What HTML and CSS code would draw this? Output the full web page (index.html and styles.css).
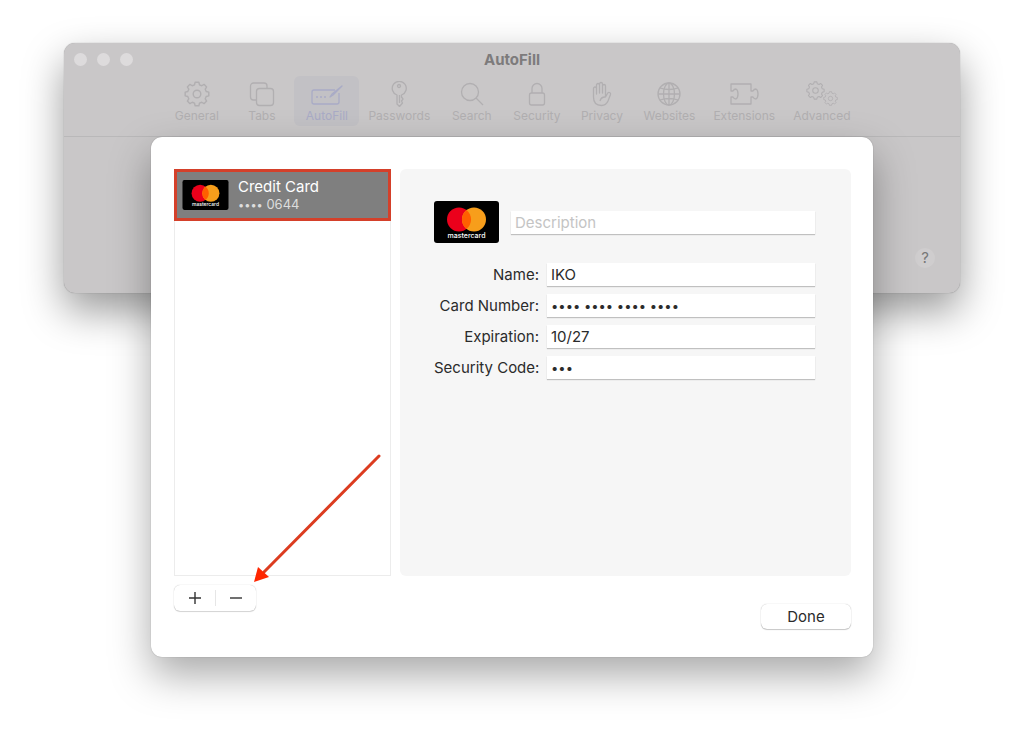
FILE: index.html
```html
<!DOCTYPE html>
<html lang="en">
<head>
    <meta charset="UTF-8">
    <meta name="viewport" content="width=device-width, initial-scale=1.0">
    <title>AutoFill</title>
    <link rel="stylesheet" href="styles.css">
</head>
<body>
    <!-- shared icons -->
    <svg class="defs">
        <symbol id="gear" viewBox="-12 -12 24 24">
            <path d="M-2.3-8.5L-1.7-10.9H1.7L2.3-8.5L4.4-7.6L6.5-8.9L8.9-6.5L7.6-4.4L8.5-2.3L10.9-1.7V1.7L8.5 2.3L7.6 4.4L8.9 6.5L6.5 8.9L4.4 7.6L2.3 8.5L1.7 10.9H-1.7L-2.3 8.5L-4.4 7.6L-6.5 8.9L-8.9 6.5L-7.6 4.4L-8.5 2.3L-10.9 1.7V-1.7L-8.5-2.3L-7.6-4.4L-8.9-6.5L-6.5-8.9L-4.4-7.6Z"/>
            <circle r="3.5"/>
        </symbol>
        <symbol id="mastercard" viewBox="0 0 65 42">
            <rect width="65" height="42" rx="3" fill="#000"/>
            <circle cx="25" cy="18.500" r="12" fill="#eb001b"/>
            <circle cx="40" cy="18.500" r="12" fill="#f79e1b"/>
            <path d="M32.500 9.100A12 12 0 0 1 32.500 27.900A12 12 0 0 1 32.500 9.100Z" fill="#ff5f00"/>
        </symbol>
    </svg>

    <main class="window">
        <header class="titlebar">
            <div class="lights"><span></span><span></span><span></span></div>
            <h1>AutoFill</h1>
        </header>

        <nav class="toolbar">
            <button class="tab" type="button">
                <svg width="32" height="26" viewBox="0 0 32 26"><use href="#gear" x="3" y="0" width="26" height="26"/></svg>
                General
            </button>
            <button class="tab" type="button">
                <svg width="32" height="26" viewBox="0 0 32 26">
                    <path d="M10 19H7.500A3 3 0 0 1 4.500 16V5A3 3 0 0 1 7.500 2H18A3 3 0 0 1 21 5V7"/>
                    <rect x="10.500" y="7.500" width="17" height="17" rx="3"/>
                </svg>
                Tabs
            </button>
            <button class="tab selected" type="button">
                <svg width="32" height="26" viewBox="0 0 32 26">
                    <path d="M24 9H3A2 2 0 0 0 1 11V21A2 2 0 0 0 3 23H26A2 2 0 0 0 28 21V12"/>
                    <path d="M31 5L22 14L19 16L21 13Z"/>
                    <path d="M5 16H7M9 16H11M13 16H15"/>
                </svg>
                AutoFill
            </button>
            <button class="tab" type="button">
                <svg width="32" height="26" viewBox="0 0 32 26">
                    <path d="M14 14A7 7 0 1 1 18.500 14V16L20 18L18.500 20L19.500 22L16.500 25.500L14 23Z"/>
                    <circle cx="16" cy="5" r="1.500"/>
                    <path d="M16.500 14V22"/>
                </svg>
                Passwords
            </button>
            <button class="tab" type="button">
                <svg width="32" height="26" viewBox="0 0 32 26">
                    <circle cx="14" cy="11" r="8.500"/>
                    <path d="M20 17L27 24"/>
                </svg>
                Search
            </button>
            <button class="tab" type="button">
                <svg width="32" height="26" viewBox="0 0 32 26">
                    <rect x="8.500" y="12" width="15" height="12" rx="2"/>
                    <path d="M11 12V7.500A5 5 0 0 1 21 7.500V12"/>
                </svg>
                Security
            </button>
            <button class="tab" type="button">
                <svg width="32" height="26" viewBox="0 0 32 26">
                    <path d="M7.500 16V7.500A1.500 1.500 0 0 1 10.500 7.500V13V4A1.500 1.500 0 0 1 13.500 4V12V3A1.500 1.500 0 0 1 16.500 3V12V5A1.500 1.500 0 0 1 19.500 5V16L21.500 12.500A1.400 1.400 0 0 1 24.500 13.500L22 20Q20 24.500 15.500 24.500Q7.500 24.500 7.500 16Z"/>
                    <path d="M14 20Q15 16 19 16"/>
                </svg>
                Privacy
            </button>
            <button class="tab" type="button">
                <svg width="32" height="26" viewBox="0 0 32 26">
                    <circle cx="16" cy="13" r="11"/>
                    <ellipse cx="16" cy="13" rx="5.500" ry="11"/>
                    <path d="M16 2V24M5 13H27M7 7Q16 10 25 7M7 19Q16 16 25 19"/>
                </svg>
                Websites
            </button>
            <button class="tab" type="button">
                <svg width="32" height="26" viewBox="0 0 32 26">
                    <path d="M3 3H23V10H25Q26 8 28 8Q30 9 30 13Q30 17 28 18Q26 18 25 16H23V23H3V16H5Q6 18 8 18Q10 17 10 13Q10 9 8 8Q6 8 5 10H3Z"/>
                </svg>
                Extensions
            </button>
            <button class="tab" type="button">
                <svg width="32" height="26" viewBox="0 0 32 26">
                    <use href="#gear" x="0" y="0" width="19" height="19"/>
                    <use href="#gear" x="17" y="10" width="15" height="15"/>
                </svg>
                Advanced
            </button>
        </nav>

        <div class="backdrop">
            <button class="help" type="button" aria-label="Help">?</button>
        </div>

        <section class="sheet">
            <div class="columns">
                <div class="card-list">
                    <button class="card-item" type="button">
                        <svg width="47" height="30" viewBox="0 0 65 42">
                            <use href="#mastercard"/>
                            <text x="32.500" y="37" class="brand">mastercard</text>
                        </svg>
                        <span class="card-text">
                            <span class="card-name">Credit Card</span>
                            <span class="card-digits"><span class="dots">••••</span> 0644</span>
                        </span>
                    </button>
                    <svg class="arrow" width="130" height="130" viewBox="0 0 130 130">
                        <path d="M125 2L10 118" stroke="#dc3c20" stroke-width="3" stroke-linecap="round"/>
                        <path d="M0 128L4 113L15 123Z" fill="#ff2600"/>
                    </svg>
                </div>

                <form class="details">
                    <div class="description">
                        <svg width="65" height="42" viewBox="0 0 65 42">
                            <use href="#mastercard"/>
                            <text x="32.500" y="37" class="brand">mastercard</text>
                        </svg>
                        <input type="text" placeholder="Description" aria-label="Description">
                    </div>
                    <div class="fields">
                        <label for="name">Name:</label>
                        <input id="name" type="text" value="IKO">
                        <label for="number">Card Number:</label>
                        <input id="number" class="masked" type="text" value="•••• •••• •••• ••••">
                        <label for="expiration">Expiration:</label>
                        <input id="expiration" type="text" value="10/27">
                        <label for="code">Security Code:</label>
                        <input id="code" class="masked" type="text" value="•••">
                    </div>
                </form>
            </div>

            <footer class="actions">
                <div class="add-remove">
                    <button type="button" aria-label="Add card">
                        <svg width="14" height="14" viewBox="0 0 14 14"><path d="M7 1V13M1 7H13"/></svg>
                    </button>
                    <button type="button" aria-label="Remove card">
                        <svg width="14" height="14" viewBox="0 0 14 14"><path d="M1 7H13"/></svg>
                    </button>
                </div>
                <button class="done" type="button">Done</button>
            </footer>
        </section>
    </main>
</body>
</html>
```

FILE: styles.css
```css
:root {
    --window: #c9c7c8;
    --line: #b9b8b9;
    --dim: #b1afb1;
    --text: #2b2b2b;
    --red: #d4402a;
}

* {
    box-sizing: border-box;
    margin: 0;
    padding: 0;
}

body {
    min-height: 100vh;
    font-family: Inter, "Liberation Sans", sans-serif;
    font-size: 15px;
    color: var(--text);
    background-color: #fff;
    padding: 43px 64px;
}

button,
input {
    font: inherit;
    color: inherit;
    border: none;
    background: none;
}

svg {
    fill: none;
    flex: none;
}

.defs {
    display: none;
}

.brand {
    font-size: 7px;
    font-weight: 500;
    fill: #fff;
    text-anchor: middle;
}

/* preferences window */
.window {
    position: relative;
    background-color: var(--window);
    border-radius: 11px;
    box-shadow: 0 0 1px rgba(0, 0, 0, 0.4), 0 18px 40px rgba(0, 0, 0, 0.4);
}

.titlebar {
    display: grid;
    grid-template-columns: 1fr auto 1fr;
    align-items: center;
    height: 33px;
    padding: 0 10px;
}

.lights {
    display: flex;
    gap: 10px;
}

.lights span {
    width: 13px;
    height: 13px;
    border-radius: 50%;
    background-color: #dddbdc;
}

h1 {
    font-size: 15px;
    font-weight: 700;
    color: #7d7b7c;
}

.toolbar {
    display: flex;
    justify-content: center;
    padding-bottom: 10px;
    border-bottom: 1px solid var(--line);
}

.tab {
    display: flex;
    flex-direction: column;
    align-items: center;
    min-width: 65px;
    height: 50px;
    padding: 5px 9px;
    font-size: 12px;
    line-height: 18px;
    color: var(--dim);
    border-radius: 6px;
}

.tab svg {
    stroke: currentColor;
    stroke-width: 1.3;
    stroke-linejoin: round;
}

.tab.selected {
    background-color: #c2c1c5;
    color: #a9abc6;
}

.backdrop {
    display: flex;
    justify-content: flex-end;
    align-items: flex-end;
    height: 156px;
    padding: 25px;
}

.help {
    width: 20px;
    height: 20px;
    border-radius: 50%;
    background-color: #cfcdce;
    color: #777;
    line-height: 20px;
}

/* sheet that drops over the window */
.sheet {
    position: absolute;
    top: 94px;
    left: 87px;
    right: 87px;
    padding: 32px 22px 28px 23px;
    background-color: #fff;
    border-radius: 11px;
    box-shadow: 0 0 1px rgba(0, 0, 0, 0.4), 0 18px 40px rgba(0, 0, 0, 0.34);
}

.columns {
    display: flex;
    gap: 9px;
    min-height: 407px;
}

.card-list {
    position: relative;
    width: 217px;
    border: 1px solid #ececec;
    border-top: none;
}

.card-item {
    display: flex;
    align-items: center;
    gap: 9px;
    width: 217px;
    height: 52px;
    margin-left: -1px;
    padding: 0 5px;
    text-align: left;
    color: #fff;
    background-color: #7f7f7f;
    border: 3px solid var(--red);
}

.card-text {
    display: flex;
    flex-direction: column;
}

.card-name {
    line-height: 18px;
}

.card-digits {
    font-size: 13px;
    line-height: 16px;
    color: #ddd;
}

.dots {
    font-size: 11px;
}

.arrow {
    position: absolute;
    left: 79px;
    top: 285px;
}

.details {
    flex: 1;
    padding: 32px 36px 32px 34px;
    background-color: #f6f6f6;
    border-radius: 6px;
}

.description {
    display: flex;
    align-items: center;
    gap: 12px;
    margin-bottom: 20px;
}

.description input {
    flex: 1;
}

.fields {
    display: grid;
    grid-template-columns: 105px 1fr;
    gap: 8px;
    align-items: center;
}

.fields label {
    text-align: right;
    white-space: nowrap;
}

input {
    min-width: 0;
    height: 23px;
    padding: 0 4px;
    background-color: #fff;
    box-shadow: 0 1px 1px rgba(0, 0, 0, 0.22);
}

input::placeholder {
    color: #c4c4c4;
    opacity: 1;
}

.masked {
    font-size: 13px;
}

.actions {
    display: flex;
    justify-content: space-between;
    height: 53px;
    padding-top: 9px;
}

.add-remove {
    display: flex;
    align-self: flex-start;
    height: 26px;
    border-radius: 6px;
    box-shadow: 0 0 1px rgba(0, 0, 0, 0.3), 0 1px 1px rgba(0, 0, 0, 0.15);
}

.add-remove button {
    display: flex;
    align-items: center;
    justify-content: center;
    width: 41px;
}

.add-remove button + button {
    background: linear-gradient(#e6e6e6, #e6e6e6) left / 1px 16px no-repeat;
}

.add-remove svg {
    stroke: #333;
    stroke-width: 1.4;
}

.done {
    align-self: flex-end;
    width: 90px;
    height: 25px;
    border-radius: 6px;
    box-shadow: 0 0 1px rgba(0, 0, 0, 0.3), 0 1px 1px rgba(0, 0, 0, 0.2);
}
```
